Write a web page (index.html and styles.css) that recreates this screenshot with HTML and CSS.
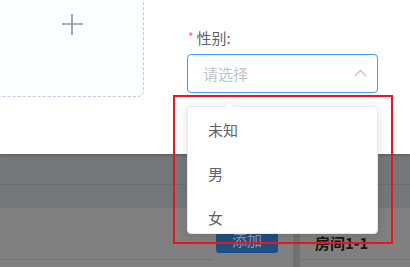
FILE: index.html
```html
<!DOCTYPE html>
<html lang="zh">
<head>
<meta charset="utf-8">
<link rel="stylesheet" href="styles.css">
</head>
<body>
<div class="screen">
  <div class="dialog">
    <div class="uploader">
      <svg class="plus" width="22" height="22" viewBox="0 0 22 22"><path d="M11 1V22M1 11H22" stroke="#8c939d" stroke-width="1.6" fill="none"/></svg>
    </div>
    <div class="form-item">
      <div class="label"><span class="star">*</span>性别:</div>
      <div class="select">
        <span class="placeholder">请选择</span>
        <svg class="chevron" width="13" height="8" viewBox="0 0 13 8"><path d="M1 7L6.5 1.5L12 7" stroke="#c0c4cc" stroke-width="1.3" fill="none"/></svg>
      </div>
    </div>
  </div>
  <div class="page">
    <div class="head-row"></div>
    <div class="head-row2"></div>
    <div class="body-row">
      <div class="cell-left"><span class="btn">添加</span></div>
      <div class="divider"></div>
      <div class="cell-right"><span class="room">房间1-1</span></div>
    </div>
  </div>
  <div class="dropdown">
    <span class="arrow"></span>
    <ul class="options">
      <li>未知</li>
      <li>男</li>
      <li>女</li>
    </ul>
  </div>
  <div class="highlight"></div>
</div>
</body>
</html>
```
FILE: styles.css
```css
* { box-sizing: border-box; }
html, body { margin: 0; padding: 0; }
body {
  width: 410px;
  height: 267px;
  overflow: hidden;
  font-family: "Noto Sans CJK SC", "Noto Sans", sans-serif;
  background: #808080;
}
.screen {
  position: relative;
  width: 410px;
  height: 267px;
  overflow: hidden;
}
.dialog {
  position: relative;
  z-index: 1;
  height: 154px;
  background: #fff;
  display: flex;
  align-items: flex-start;
  box-shadow: 0 1px 3px rgba(0,0,0,0.25);
}
.uploader {
  width: 148px;
  height: 146px;
  margin-top: -49px;
  margin-left: -4px;
  flex: none;
  background: #fbfdff;
  border: 1px dashed #c0ccda;
  border-radius: 6px;
  display: flex;
  align-items: center;
  justify-content: center;
}
.plus { display: block; margin-left: 3px; }
.form-item {
  margin-left: 43px;
  margin-top: 27px;
  width: 191px;
}
.label {
  height: 20px;
  line-height: 20px;
  font-size: 15px;
  color: #606266;
  padding-left: 1px;
}
.star {
  color: #f56c6c;
  font-size: 12px;
  margin-right: 3px;
  vertical-align: 2px;
}
.select {
  margin-top: 7px;
  height: 39px;
  border: 1px solid #409eff;
  border-radius: 4px;
  display: flex;
  align-items: center;
  justify-content: space-between;
  padding: 0 10px 0 15px;
}
.placeholder {
  font-size: 15px;
  color: #c0c4cc;
  line-height: 20px;
}
.chevron { display: block; margin-top: -1px; }
.page { height: 113px; }
.head-row {
  height: 31px;
  background: #74777a;
  border-bottom: 1px solid #6b6e71;
}
.head-row2 {
  height: 23px;
  background: #74777a;
}
.body-row {
  display: flex;
  height: 59px;
}
.cell-left {
  width: 293px;
  padding: 18px 0 0 216px;
}
.cell-left::after {
  content: "";
  display: block;
  width: 213px;
  height: 1px;
  background: #737373;
  margin-left: -216px;
  margin-top: 6px;
}
.btn {
  display: flex;
  width: 62px;
  height: 27px;
  align-items: center;
  justify-content: center;
  background: #1f4f82;
  border-radius: 3px;
  color: #8a9ab0;
  font-size: 15px;
}
.divider {
  width: 7px;
  background: #6f7274;
}
.cell-right {
  flex: 1;
  padding: 22px 0 0 15px;
  border-bottom: 1px solid #737373;
  height: 52px;
}
.room {
  font-size: 15px;
  font-weight: bold;
  color: #161616;
  line-height: 20px;
}
.dropdown {
  position: absolute;
  z-index: 3;
  left: 187px;
  top: 106px;
  width: 191px;
  height: 128px;
  background: #fff;
  border: 1px solid #e4e7ed;
  border-radius: 4px;
  box-shadow: 0 2px 12px rgba(0,0,0,0.12);
}
.arrow {
  position: absolute;
  left: 35px;
  top: -6px;
  width: 0;
  height: 0;
  border-left: 6px solid transparent;
  border-right: 6px solid transparent;
  border-bottom: 6px solid #e4e7ed;
}
.arrow::after {
  content: "";
  position: absolute;
  left: -5px;
  top: 1px;
  border-left: 5px solid transparent;
  border-right: 5px solid transparent;
  border-bottom: 5px solid #fff;
}
.options {
  list-style: none;
  margin: 0;
  padding: 1px 0 0;
  height: 126px;
  overflow: hidden;
}
.options li {
  height: 44px;
  line-height: 44px;
  padding-left: 20px;
  font-size: 15px;
  color: #606266;
}
.highlight {
  position: absolute;
  z-index: 4;
  left: 173px;
  top: 95px;
  width: 220px;
  height: 149px;
  border: 2px solid #e8161f;
}
```
